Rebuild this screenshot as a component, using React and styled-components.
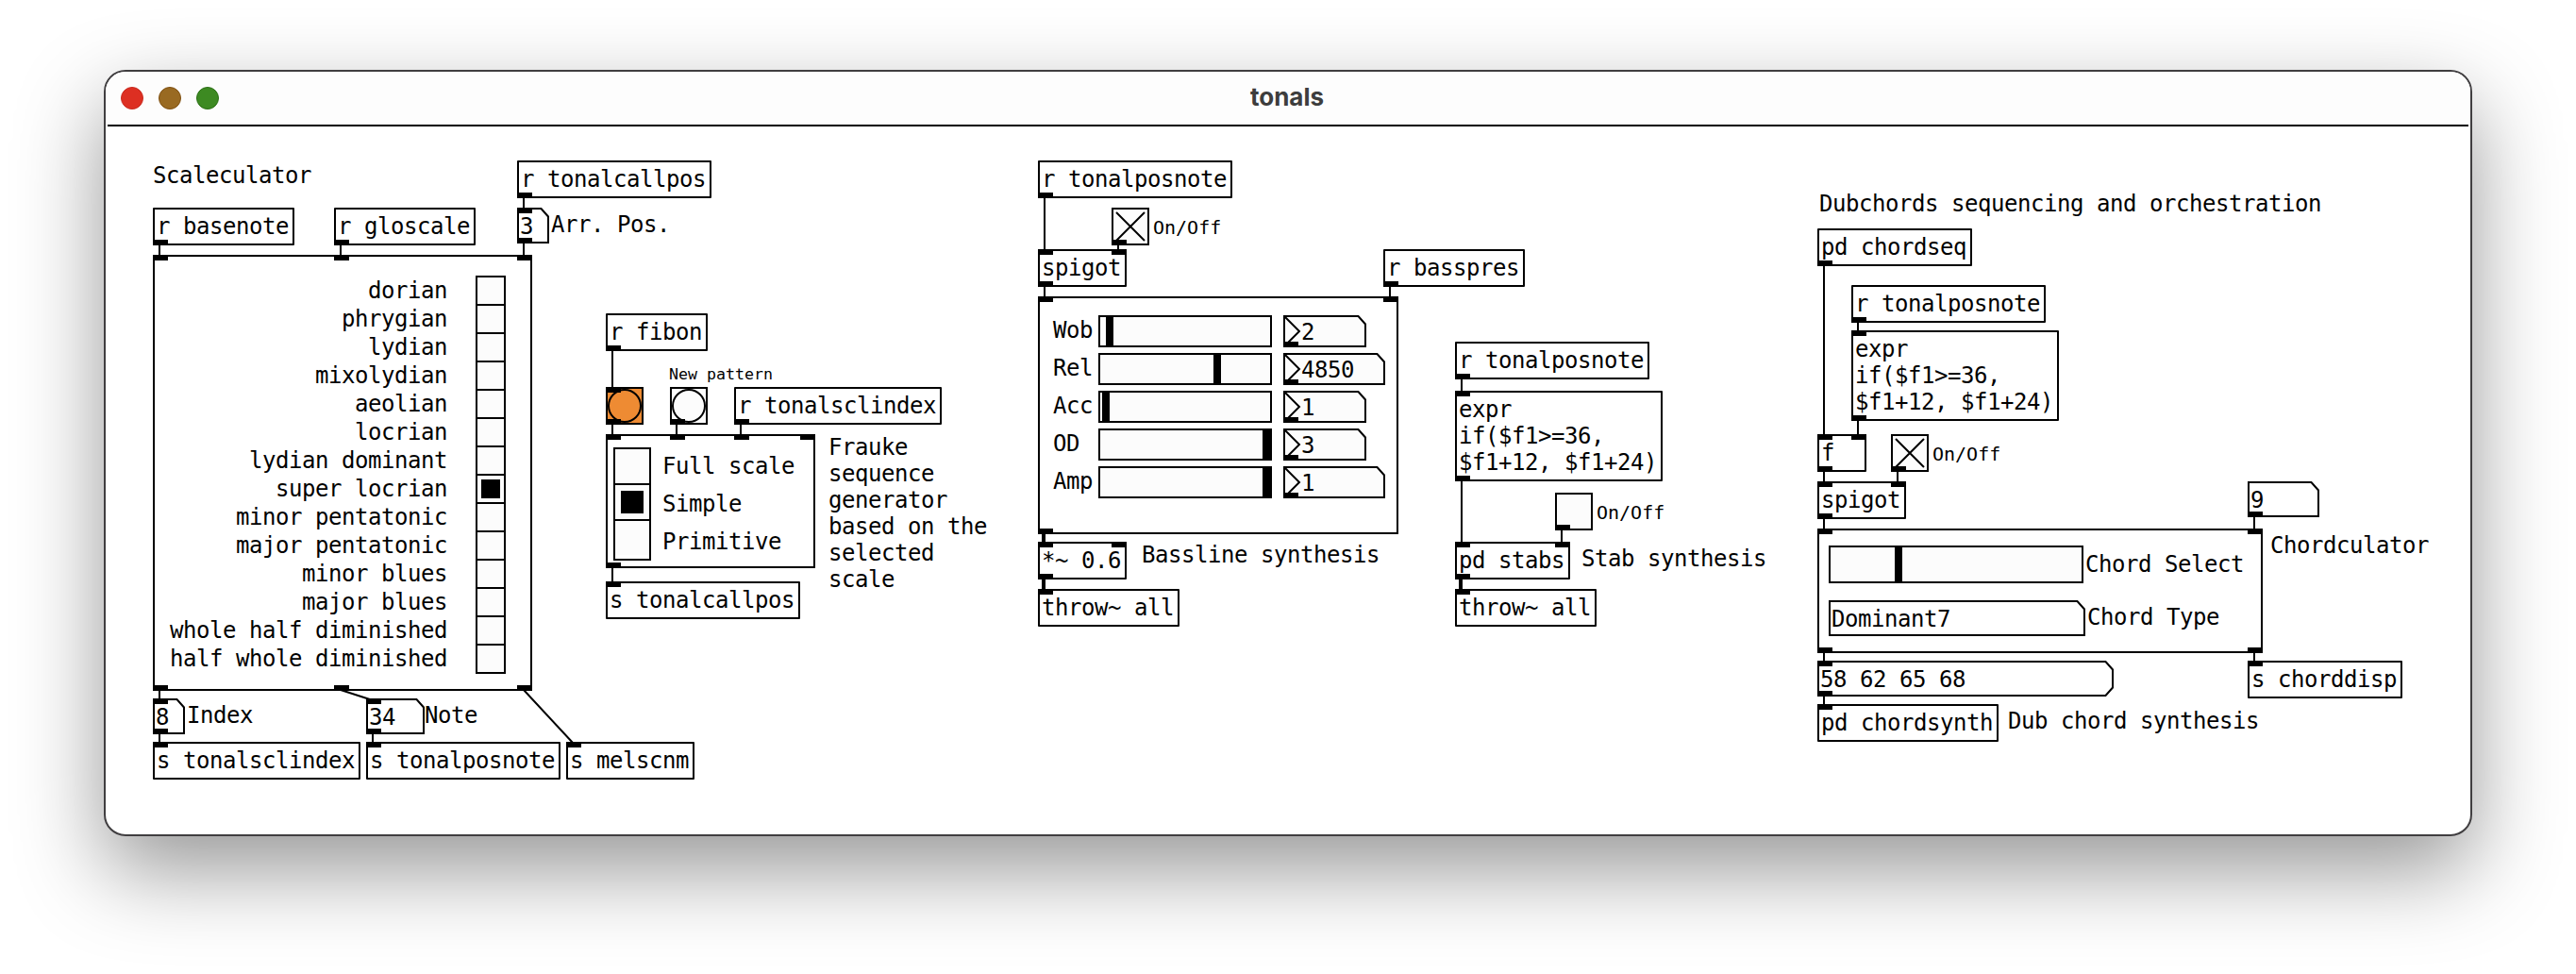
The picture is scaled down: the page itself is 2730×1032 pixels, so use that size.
import React from 'react';
import styled, { createGlobalStyle, css } from 'styled-components';

const GlobalStyle = createGlobalStyle`
  *, *::before, *::after { box-sizing: border-box; }
  html, body { margin: 0; background: #fff; overflow: hidden; }
`;

/* Desktop position of the patch's top-left corner. */
const ORIGIN = { x: 112, y: 134 };

const Desktop = styled.main`
  height: 1032px;
  padding: 74px 110px 146px;
  background: #fff;
`;

const Window = styled.section`
  display: flex;
  flex-direction: column;
  height: 812px;
  border: 2px solid #403e40;
  border-radius: 23px;
  background: #fff;
  box-shadow: 0 36px 92px rgba(0, 0, 0, 0.41);
`;

const TitleBar = styled.header`
  display: grid;
  grid-template-columns: 1fr auto 1fr;
  align-items: center;
  height: 56px;
  padding: 0 2px;
  border-radius: 21px 21px 0 0;
  background: #fdfdfd;
`;

const Divider = styled.div`
  height: 2px;
  margin: 0 2px;
  background: #000;
`;

const Lights = styled.div`
  display: flex;
  gap: 16px;
  padding-left: 14px;
`;

const Light = styled.span`
  width: 24px;
  height: 24px;
  border: 1.5px solid ${(p) => p.$edge};
  border-radius: 50%;
  background: ${(p) => p.$fill};
`;

const Title = styled.h1`
  margin: 0;
  padding: 0 2px 3px 0;
  font: 700 26px/30px Inter, 'Liberation Sans', sans-serif;
  color: #3d3d3d;
`;

const Canvas = styled.div`
  position: relative;
  flex: 1;
  font: 24px/28px 'DejaVu Sans Mono', monospace;
  letter-spacing: -0.449px;
  color: #000;
  white-space: pre;
`;

const placed = css`
  position: absolute;
  left: ${(p) => p.$x - ORIGIN.x}px;
  top: ${(p) => p.$y - ORIGIN.y}px;
`;

const Wires = styled.svg`
  position: absolute;
  inset: 0;
  width: 100%;
  height: 100%;
  fill: none;
  stroke: #000;
`;

const ObjectBox = styled.div`
  ${placed}
  width: ${(p) => p.$w}px;
  padding: 4px 0 4px 2px;
  border: 2px solid #000;
  border-radius: 1px;
  background: #fff;
`;

const GraphBox = styled.div`
  ${placed}
  width: ${(p) => p.$w}px;
  height: ${(p) => p.$h}px;
  border: 2px solid #000;
  background: #fff;
`;

const Port = styled.i`
  position: absolute;
  left: ${(p) => p.$at - p.$inset}px;
  ${(p) => (p.$out ? 'bottom' : 'top')}: ${(p) => -p.$inset}px;
  width: 16px;
  height: 6px;
  background: #000;
`;

const Comment = styled.div`
  ${placed}
`;

const SmallText = styled.div`
  ${placed}
  font-size: ${(p) => p.$size}px;
  line-height: ${(p) => (p.$size > 18 ? 24 : 19)}px;
  letter-spacing: 0;
`;

const Button = styled.div`
  ${placed}
  width: 40px;
  height: 40px;
  border: 2px solid #000;
  background: ${(p) => p.$fill || '#fcfcfc'};
  svg {
    display: block;
    width: 36px;
    height: 36px;
    fill: none;
    stroke: #000;
    stroke-width: 2;
  }
`;

const AtomFrame = styled.div`
  position: relative;
  width: ${(p) => p.$w}px;
  height: ${(p) => p.$h}px;
  padding: ${(p) => (p.$h < 38 ? 4 : 6)}px 0 0 ${(p) => p.$indent}px;
`;

const AtomOutline = styled.svg`
  position: absolute;
  inset: 0;
  stroke: #000;
  stroke-width: 2;
`;

const AtomText = styled.span`
  position: relative;
  display: block;
`;

const PlacedAtom = styled.div`
  ${placed}
`;

const Radio = styled.div`
  width: ${(p) => p.$cell + 4}px;
  border: 2px solid #000;
`;

const RadioCell = styled.div`
  display: flex;
  align-items: center;
  justify-content: center;
  box-sizing: content-box;
  height: ${(p) => p.$cell}px;
  background: #fcfcfc;
  & + & { border-top: 2px solid #000; }
`;

const RadioMark = styled.span`
  width: ${(p) => p.$size}px;
  height: ${(p) => p.$size}px;
  background: #000;
`;

const ScaleBody = styled.div`
  display: flex;
  justify-content: flex-end;
  gap: 30px;
  padding: 20px 26px 0 0;
`;

const ScaleNames = styled.div`
  padding-top: 1px;
  text-align: right;
  line-height: 30px;
`;

const PatternBody = styled.div`
  display: flex;
  gap: 12px;
  padding: 12px 0 0 6px;
  line-height: 40px;
`;

const BassBody = styled.div`
  display: flex;
  flex-direction: column;
  gap: 6px;
  padding: 18px 0 0 14px;
`;

const BassRow = styled.div`
  display: grid;
  grid-template-columns: 48px 184px auto;
  height: 34px;
`;

const BassName = styled.span`
  line-height: 32px;
`;

const BassValue = styled.div`
  padding-left: 12px;
`;

const Track = styled.div`
  width: ${(p) => p.$w}px;
  height: ${(p) => p.$h}px;
  padding-left: ${(p) => p.$knob - 2}px;
  border: 2px solid #000;
  background: #fcfcfc;
`;

const Knob = styled.div`
  width: 8px;
  height: 100%;
  background: #000;
`;

const ChordBody = styled.div`
  display: flex;
  flex-direction: column;
  gap: 18px;
  padding: 16px 0 0 10px;
`;

const ChordRow = styled.div`
  display: flex;
  gap: 2px;
`;

const ChordName = styled.span`
  padding-top: ${(p) => p.$top}px;
`;

function Ports({ ins = [], outs = [], inset = 2 }) {
  return (
    <>
      {ins.map((at) => <Port key={`i${at}`} $at={at} $inset={inset} />)}
      {outs.map((at) => <Port key={`o${at}`} $at={at} $inset={inset} $out />)}
    </>
  );
}

function Obj({ x, y, text, ins, outs, cols }) {
  const widest = cols || Math.max(...text.split('\n').map((l) => l.length));
  return (
    <ObjectBox $x={x} $y={y} $w={widest * 14 + 10}>
      {text}
      <Ports ins={ins} outs={outs} />
    </ObjectBox>
  );
}

function Atom({ w, h = 38, text, kind, ins, outs }) {
  const isNumber2 = kind === 'number2';
  const right = w - 1;
  const bottom = h - 1;
  const lower = kind === 'list'
    ? `V${bottom - 8.5} L${right - 7.5} ${bottom}`
    : `V${bottom}`;
  return (
    <AtomFrame $w={w} $h={h} $indent={isNumber2 ? 19 : 3}>
      <AtomOutline width={w} height={h}>
        <path
          fill={isNumber2 ? '#fcfcfc' : '#fff'}
          d={`M1 1 H${right - 7.5} L${right} 9.5 ${lower} H1 Z`}
        />
        {isNumber2 && <path fill="none" d={`M2 2 L17 ${h / 2} L2 ${h - 2}`} />}
      </AtomOutline>
      <AtomText>{text}</AtomText>
      <Ports ins={ins} outs={outs} inset={0} />
    </AtomFrame>
  );
}

function Toggle({ x, y, on }) {
  return (
    <Button $x={x} $y={y}>
      <svg viewBox="0 0 36 36">
        {on && <path d="M3 3 L33 33 M33 3 L3 33" />}
      </svg>
      <Ports outs={[0]} />
    </Button>
  );
}

function Bang({ x, y, fill, ins }) {
  return (
    <Button $x={x} $y={y} $fill={fill}>
      <svg viewBox="0 0 36 36"><circle cx="18" cy="18" r="17" /></svg>
      <Ports ins={ins} outs={[0]} />
    </Button>
  );
}

function RadioColumn({ count, selected, cell, mark }) {
  return (
    <Radio $cell={cell}>
      {Array.from({ length: count }, (_, i) => (
        <RadioCell key={i} $cell={cell}>
          {i === selected && <RadioMark $size={mark} />}
        </RadioCell>
      ))}
    </Radio>
  );
}

const SCALES = [
  'dorian', 'phrygian', 'lydian', 'mixolydian', 'aeolian', 'locrian',
  'lydian dominant', 'super locrian', 'minor pentatonic', 'major pentatonic',
  'minor blues', 'major blues', 'whole half diminished', 'half whole diminished',
];

const PATTERNS = ['Full scale', 'Simple', 'Primitive'];

const BASS = [
  { name: 'Wob', knob: 8, value: '2', w: 88 },
  { name: 'Rel', knob: 122, value: '4850', w: 108 },
  { name: 'Acc', knob: 4, value: '1', w: 88 },
  { name: 'OD', knob: 174, value: '3', w: 88 },
  { name: 'Amp', knob: 174, value: '1', w: 108 },
];

/* x1, y1, x2, y2 of each control wire. */
const WIRES = [
  [169, 260, 169, 270], [361, 260, 361, 270], [555, 210, 555, 220], [555, 258, 555, 270],
  [169, 732, 169, 740], [169, 778, 169, 786], [361, 731, 395, 742], [395, 778, 395, 786],
  [555, 731, 607, 787],
  [649, 372, 649, 410], [649, 450, 649, 460], [717, 450, 717, 460], [785, 450, 785, 460],
  [649, 602, 649, 616],
  [1107, 210, 1107, 264], [1185, 260, 1185, 264], [1107, 304, 1107, 314], [1473, 304, 1473, 314],
  [1549, 402, 1549, 414], [1549, 510, 1549, 574], [1655, 562, 1655, 574],
  [1933, 282, 1933, 460], [1969, 342, 1969, 350], [1969, 446, 1969, 460],
  [1933, 500, 1933, 510], [2011, 500, 2011, 510], [1933, 550, 1933, 560], [2389, 548, 2389, 560],
  [1933, 692, 1933, 700], [2389, 692, 2389, 700], [1933, 738, 1933, 746],
];

const SIGNAL_WIRES = [
  [1106, 566, 1106, 574], [1106, 614, 1106, 624], [1548, 614, 1548, 624],
];

function WireLayer() {
  const toPath = ([x1, y1, x2, y2]) =>
    `M${x1 - ORIGIN.x} ${y1 - ORIGIN.y} L${x2 - ORIGIN.x} ${y2 - ORIGIN.y}`;
  return (
    <Wires>
      <path strokeWidth="2" d={WIRES.map(toPath).join(' ')} />
      <path strokeWidth="4" d={SIGNAL_WIRES.map(toPath).join(' ')} />
    </Wires>
  );
}

function Scaleculator() {
  return (
    <>
      <Comment $x={162} $y={172}>Scaleculator</Comment>
      <Obj x={162} y={220} text="r basenote" outs={[0]} />
      <Obj x={354} y={220} text="r gloscale" outs={[0]} />
      <Obj x={548} y={170} text="r tonalcallpos" outs={[0]} />
      <PlacedAtom $x={548} $y={220}><Atom w={34} text="3" ins={[0]} outs={[0]} /></PlacedAtom>
      <Comment $x={584} $y={224}>Arr. Pos.</Comment>
      <GraphBox $x={162} $y={270} $w={402} $h={462}>
        <ScaleBody>
          <ScaleNames>{SCALES.map((s) => <div key={s}>{s}</div>)}</ScaleNames>
          <RadioColumn count={14} selected={7} cell={28} mark={20} />
        </ScaleBody>
        <Ports ins={[0, 192, 386]} outs={[0, 192, 386]} />
      </GraphBox>
      <PlacedAtom $x={162} $y={740}><Atom w={34} text="8" ins={[0]} outs={[0]} /></PlacedAtom>
      <Comment $x={198} $y={744}>Index</Comment>
      <PlacedAtom $x={388} $y={740}><Atom w={62} text="34" ins={[0]} outs={[0]} /></PlacedAtom>
      <Comment $x={450} $y={744}>Note</Comment>
      <Obj x={162} y={786} text="s tonalsclindex" ins={[0]} />
      <Obj x={388} y={786} text="s tonalposnote" ins={[0]} />
      <Obj x={600} y={786} text="s melscnm" ins={[0]} />
    </>
  );
}

function PatternGenerator() {
  return (
    <>
      <Obj x={642} y={332} text="r fibon" outs={[0]} />
      <SmallText $x={709} $y={387} $size={16.6}>New pattern</SmallText>
      <Bang x={642} y={410} fill="#ee8b33" ins={[0]} />
      <Bang x={710} y={410} />
      <Obj x={778} y={410} text="r tonalsclindex" outs={[0]} />
      <GraphBox $x={642} $y={460} $w={222} $h={142}>
        <PatternBody>
          <RadioColumn count={3} selected={1} cell={36} mark={24} />
          <div>{PATTERNS.map((p) => <div key={p}>{p}</div>)}</div>
        </PatternBody>
        <Ports ins={[0, 68, 136, 206]} outs={[0]} />
      </GraphBox>
      <Comment $x={878} $y={460}>{'Frauke\nsequence\ngenerator\nbased on the\nselected\nscale'}</Comment>
      <Obj x={642} y={616} text="s tonalcallpos" ins={[0]} />
    </>
  );
}

function Bassline() {
  return (
    <>
      <Obj x={1100} y={170} text="r tonalposnote" outs={[0]} />
      <Toggle x={1178} y={220} on />
      <SmallText $x={1222} $y={229} $size={20}>On/Off</SmallText>
      <Obj x={1100} y={264} text="spigot" ins={[0, 78]} outs={[0]} />
      <Obj x={1466} y={264} text="r basspres" outs={[0]} />
      <GraphBox $x={1100} $y={314} $w={382} $h={252}>
        <BassBody>
          {BASS.map((b) => (
            <BassRow key={b.name}>
              <BassName>{b.name}</BassName>
              <Track $w={184} $h={34} $knob={b.knob}><Knob /></Track>
              <BassValue><Atom kind="number2" w={b.w} h={34} text={b.value} outs={[0]} /></BassValue>
            </BassRow>
          ))}
        </BassBody>
        <Ports ins={[0, 366]} outs={[0]} />
      </GraphBox>
      <Obj x={1100} y={574} text="*~ 0.6" ins={[0, 78]} outs={[0]} />
      <Comment $x={1210} $y={574}>Bassline synthesis</Comment>
      <Obj x={1100} y={624} text="throw~ all" ins={[0]} />
    </>
  );
}

const EXPR = 'expr\nif($f1>=36,\n$f1+12, $f1+24)';

function Stabs() {
  return (
    <>
      <Obj x={1542} y={362} text="r tonalposnote" outs={[0]} />
      <Obj x={1542} y={414} text={EXPR} ins={[0]} outs={[0]} />
      <Toggle x={1648} y={522} />
      <SmallText $x={1692} $y={531} $size={20}>On/Off</SmallText>
      <Obj x={1542} y={574} text="pd stabs" ins={[0, 106]} outs={[0]} />
      <Comment $x={1676} $y={578}>Stab synthesis</Comment>
      <Obj x={1542} y={624} text="throw~ all" ins={[0]} />
    </>
  );
}

function Dubchords() {
  return (
    <>
      <Comment $x={1928} $y={202}>Dubchords sequencing and orchestration</Comment>
      <Obj x={1926} y={242} text="pd chordseq" outs={[0]} />
      <Obj x={1962} y={302} text="r tonalposnote" outs={[0]} />
      <Obj x={1962} y={350} text={EXPR} ins={[0]} outs={[0]} />
      <Obj x={1926} y={460} text="f" cols={3} ins={[0, 36]} outs={[0]} />
      <Toggle x={2004} y={460} on />
      <SmallText $x={2048} $y={469} $size={20}>On/Off</SmallText>
      <Obj x={1926} y={510} text="spigot" ins={[0, 78]} outs={[0]} />
      <PlacedAtom $x={2382} $y={510}><Atom w={76} text="9" outs={[0]} /></PlacedAtom>
      <GraphBox $x={1926} $y={560} $w={472} $h={132}>
        <ChordBody>
          <ChordRow>
            <Track $w={270} $h={40} $knob={70}><Knob /></Track>
            <ChordName $top={6}>Chord Select</ChordName>
          </ChordRow>
          <ChordRow>
            <Atom w={272} text="Dominant7" />
            <ChordName $top={4}>Chord Type</ChordName>
          </ChordRow>
        </ChordBody>
        <Ports ins={[0, 456]} outs={[0, 456]} />
      </GraphBox>
      <Comment $x={2406} $y={564}>Chordculator</Comment>
      <PlacedAtom $x={1926} $y={700}>
        <Atom kind="list" w={314} text="58 62 65 68" ins={[0]} outs={[0]} />
      </PlacedAtom>
      <Obj x={2382} y={700} text="s chorddisp" ins={[0]} />
      <Obj x={1926} y={746} text="pd chordsynth" ins={[0]} />
      <Comment $x={2128} $y={750}>Dub chord synthesis</Comment>
    </>
  );
}

export default function App() {
  return (
    <Desktop>
      <GlobalStyle />
      <Window>
        <TitleBar>
          <Lights>
            <Light $fill="#dd2f22" $edge="#c92a1f" />
            <Light $fill="#996a22" $edge="#7f5012" />
            <Light $fill="#3d8a22" $edge="#2b7015" />
          </Lights>
          <Title>tonals</Title>
        </TitleBar>
        <Divider />
        <Canvas>
          <Scaleculator />
          <PatternGenerator />
          <Bassline />
          <Stabs />
          <Dubchords />
          <WireLayer />
        </Canvas>
      </Window>
    </Desktop>
  );
}
